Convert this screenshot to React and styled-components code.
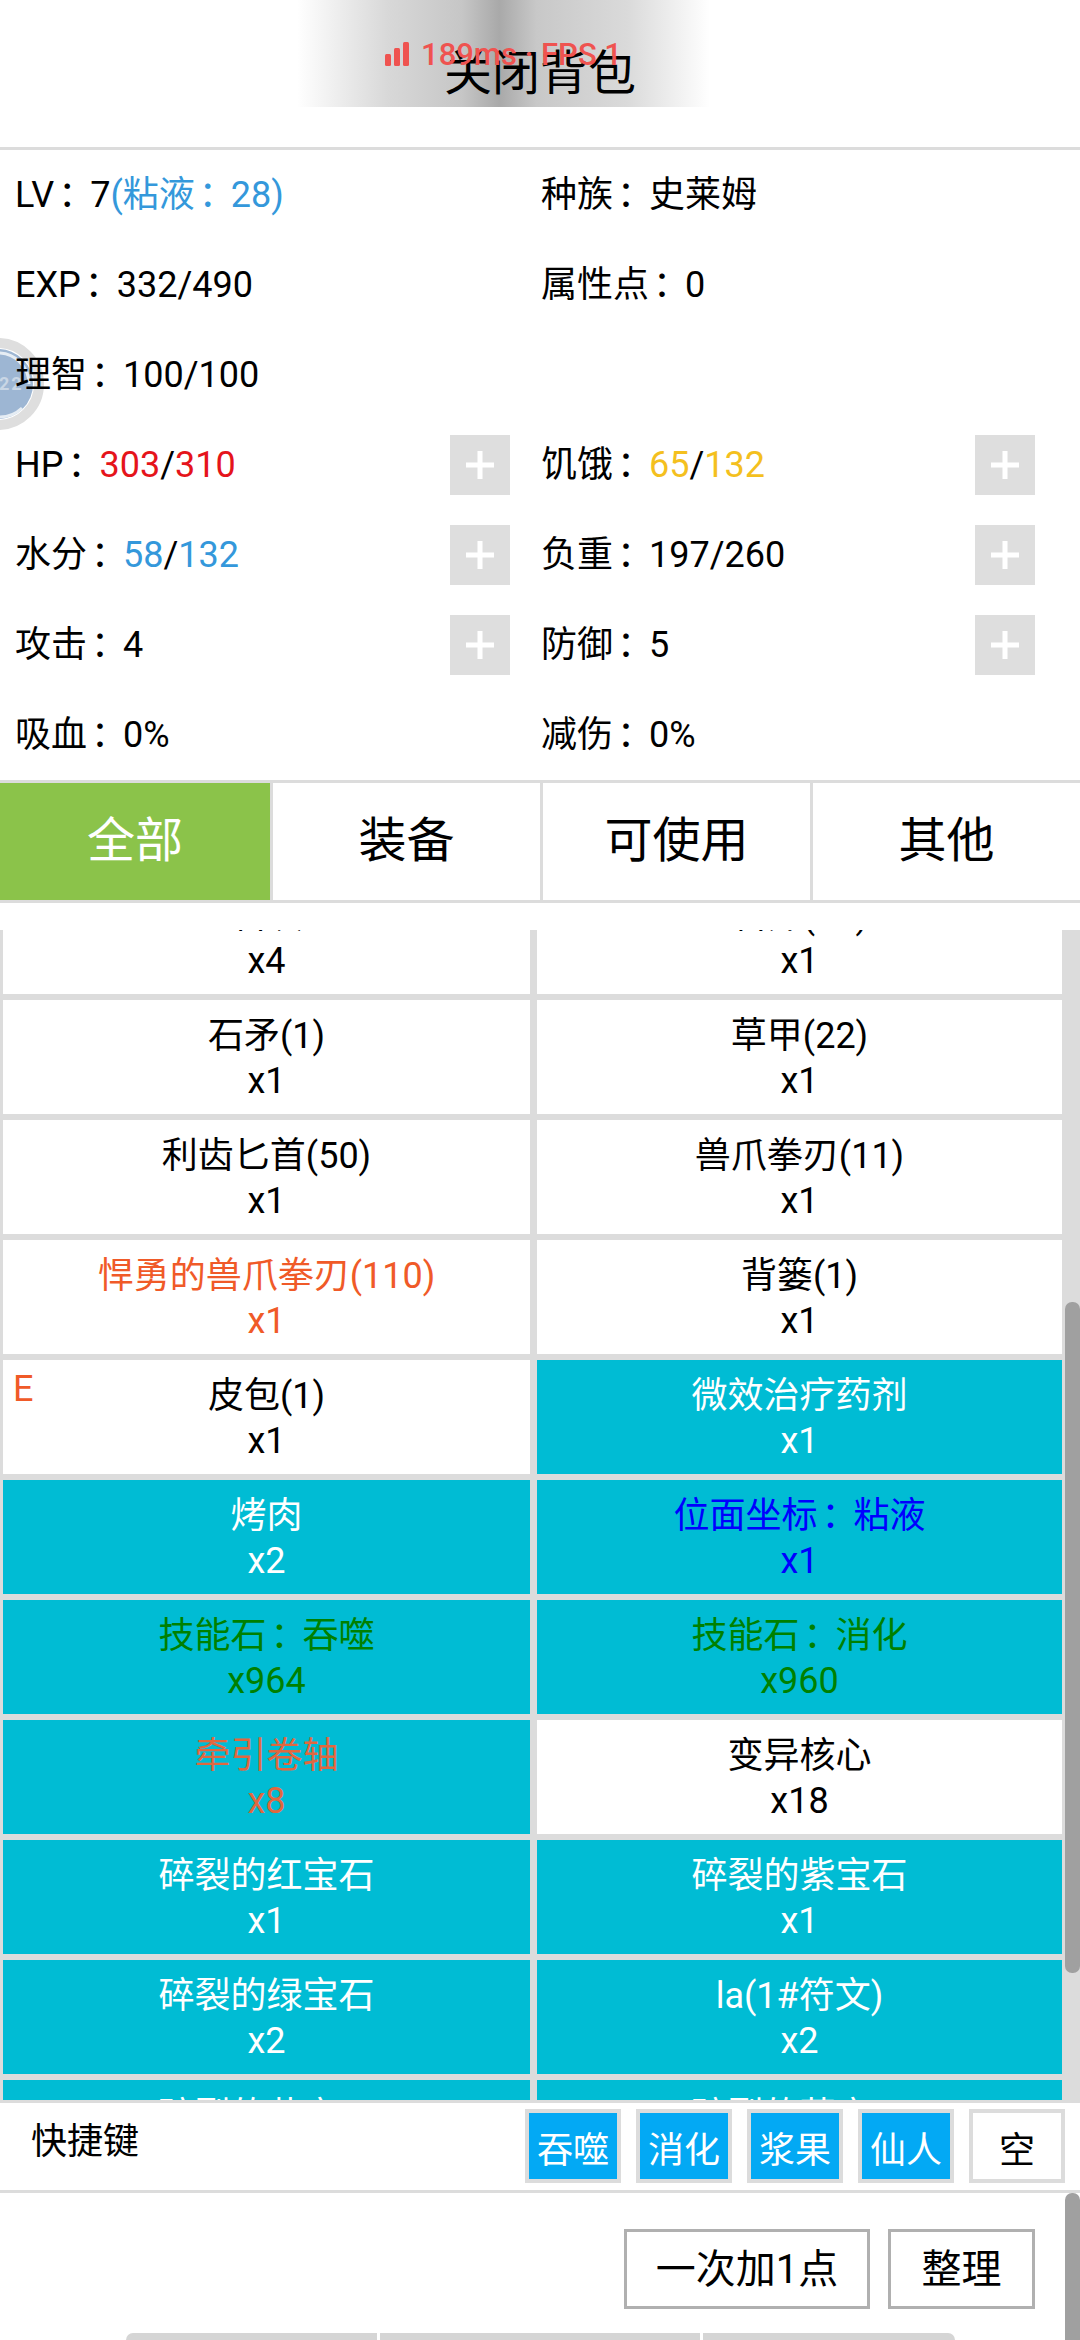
import React from 'react';
import styled, { createGlobalStyle } from 'styled-components';

const GlobalStyle = createGlobalStyle`
	html, body {
		margin: 0;
		padding: 0;
		background: #fff;
	}
	* {
		box-sizing: border-box;
	}
`;

const LINE = '#dcdcdc';
const TEAL = '#00bcd4';

const Page = styled.div`
	position: relative;
	z-index: 0;
	width: 1080px;
	height: 2340px;
	overflow: hidden;
	background: #fff;
	color: #000;
	font-family: Roboto, 'Noto Sans CJK SC', sans-serif;
	font-size: 36px;
	display: flex;
	flex-direction: column;
`;

const Header = styled.div`
	height: 150px;
	flex: none;
	border-bottom: 3px solid ${LINE};
	display: flex;
	justify-content: center;
	padding-top: 38px;
	font-size: 48px;
	line-height: 72px;
	background-image: linear-gradient(
		90deg,
		rgba(255, 255, 255, 0) 0%,
		#d8d8d8 22%,
		#c6c6c6 40%,
		#a9a9a9 49%,
		#c8c8c8 58%,
		#dadada 80%,
		rgba(255, 255, 255, 0) 100%
	);
	background-size: 413px 107px;
	background-position: 297px 0;
	background-repeat: no-repeat;
`;

const NetToast = styled.div`
	position: absolute;
	top: 42px;
	left: 297px;
	width: 413px;
	display: flex;
	justify-content: center;
	align-items: flex-start;
	gap: 12px;
	color: #ef5350;
	font-size: 31px;
	font-weight: 500;
	line-height: 26px;
	white-space: nowrap;
`;

const FloatBall = styled.svg`
	position: absolute;
	z-index: -1;
	left: -48px;
	top: 338px;
`;

const Stats = styled.div`
	flex: none;
	display: grid;
	grid-template-columns: 526px 525px;
	grid-auto-rows: 90px;
`;

const Stat = styled.div`
	display: flex;
	align-items: center;
	justify-content: space-between;
	padding: 0 16px 0 15px;
	line-height: 45px;
	white-space: nowrap;
`;

const Tint = styled.span`
	color: ${(p) => p.$color};
`;

const Colon = styled.span`
	padding-left: 4px;
	margin-right: -4px;
`;

const PlusButton = styled.div`
	width: 60px;
	height: 60px;
	flex: none;
	background: #dedede;
	color: #fff;
	display: flex;
	align-items: center;
	justify-content: center;
`;

const Tabs = styled.div`
	flex: none;
	display: grid;
	grid-template-columns: repeat(4, 270px);
	height: 123px;
	border-top: 3px solid ${LINE};
	border-bottom: 3px solid ${LINE};
`;

const Tab = styled.div`
	display: flex;
	align-items: center;
	justify-content: center;
	padding-bottom: 12px;
	font-size: 48px;
	background: ${(p) => (p.$active ? '#8bc34a' : '#fff')};
	color: ${(p) => (p.$active ? '#fff' : '#000')};
	border-left: ${(p) => (p.$active ? '0' : `3px solid ${LINE}`)};
`;

const ListWrap = styled.div`
	position: relative;
	flex: none;
	height: 1170px;
	margin-top: 27px;
	background: ${LINE};
	overflow: hidden;
`;

const ItemGrid = styled.div`
	display: grid;
	grid-template-columns: 527px 525px;
	grid-auto-rows: 114px;
	column-gap: 7px;
	row-gap: 6px;
	padding-left: 3px;
	margin-top: -50px;
`;

const Item = styled.div`
	position: relative;
	padding-top: 14px;
	text-align: center;
	line-height: 45px;
	background: ${(p) => (p.$used ? TEAL : '#fff')};
	color: ${(p) => p.$color || (p.$used ? '#fff' : '#000')};
`;

const EquipMark = styled.span`
	position: absolute;
	left: 10px;
	top: 11px;
	line-height: 36px;
	color: #f05a28;
`;

const ListThumb = styled.div`
	position: absolute;
	right: 0;
	top: 372px;
	width: 15px;
	height: 671px;
	background: #a0a0a0;
	border-radius: 7px;
`;

const Shortcuts = styled.div`
	flex: none;
	height: 93px;
	border-top: 3px solid ${LINE};
	border-bottom: 3px solid ${LINE};
	padding: 0 15px 0 31px;
	display: flex;
	justify-content: space-between;
`;

const ShortcutLabel = styled.div`
	margin-top: 17px;
	line-height: 45px;
`;

const ShortcutRow = styled.div`
	display: flex;
	gap: 15px;
	padding-top: 6px;
`;

const ShortcutKey = styled.div`
	width: 96px;
	height: 74px;
	padding-top: 1px;
	display: flex;
	align-items: center;
	justify-content: center;
	border: 4px solid ${LINE};
	background: ${(p) => (p.$filled ? '#03a9f4' : '#fff')};
	color: ${(p) => (p.$filled ? '#fff' : '#000')};
`;

const Footer = styled.div`
	position: relative;
	flex: 1;
	overflow: hidden;
`;

const Actions = styled.div`
	display: flex;
	justify-content: flex-end;
	gap: 18px;
	padding: 36px 45px 0 0;
`;

const ActionButton = styled.div`
	width: ${(p) => p.$width}px;
	height: 80px;
	padding-bottom: 6px;
	border: 3px solid #b0b0b0;
	font-size: 40px;
	display: flex;
	align-items: center;
	justify-content: center;
`;

const PeekRow = styled.div`
	display: flex;
	gap: 3px;
	margin: 24px 0 0 126px;
`;

const PeekButton = styled.div`
	width: ${(p) => p.$width}px;
	height: 7px;
	background: #d5d5d5;

	&:first-child {
		border-top-left-radius: 7px;
	}
	&:last-child {
		border-top-right-radius: 7px;
	}
`;

const PageThumb = styled.div`
	position: absolute;
	right: 0;
	top: 0;
	bottom: 0;
	width: 15px;
	background: #a0a0a0;
	border-top-left-radius: 7px;
	border-top-right-radius: 7px;
`;

const items = [
	{ name: '石块', count: 4 },
	{ name: '石斧(10)', count: 1 },
	{ name: '石矛(1)', count: 1 },
	{ name: '草甲(22)', count: 1 },
	{ name: '利齿匕首(50)', count: 1 },
	{ name: '兽爪拳刃(11)', count: 1 },
	{ name: '悍勇的兽爪拳刃(110)', count: 1, color: '#f05a28' },
	{ name: '背篓(1)', count: 1 },
	{ name: '皮包(1)', count: 1, equipped: true },
	{ name: '微效治疗药剂', count: 1, used: true },
	{ name: '烤肉', count: 2, used: true },
	{ name: '位面坐标：粘液', count: 1, used: true, color: '#0000ff' },
	{ name: '技能石：吞噬', count: 964, used: true, color: '#008000' },
	{ name: '技能石：消化', count: 960, used: true, color: '#008000' },
	{ name: '牵引卷轴', count: 8, used: true, color: '#e0683f' },
	{ name: '变异核心', count: 18 },
	{ name: '碎裂的红宝石', count: 1, used: true },
	{ name: '碎裂的紫宝石', count: 1, used: true },
	{ name: '碎裂的绿宝石', count: 2, used: true },
	{ name: 'la(1#符文)', count: 2, used: true },
	{ name: '碎裂的黄宝石', count: 1, used: true },
	{ name: '碎裂的蓝宝石', count: 1, used: true },
];

// the colon sits a bit further in than the SC glyph does
const withColon = (text) => {
	const parts = text.split('：');
	if (parts.length < 2) return text;
	return (
		<>
			{parts[0]}
			<Colon>：</Colon>
			{parts[1]}
		</>
	);
};

const Plus = () => (
	<svg width='30' height='30' viewBox='0 0 30 30'>
		<path d='M15 1v28M1 15h28' stroke='currentColor' strokeWidth='5' fill='none' />
	</svg>
);

const StatCell = ({ label, plus, children }) => (
	<Stat>
		<span>
			{label}
			<Colon>：</Colon>
			{children}
		</span>
		{plus && (
			<PlusButton>
				<Plus />
			</PlusButton>
		)}
	</Stat>
);

const App = () => {
	return (
		<Page>
			<GlobalStyle />

			<FloatBall width='92' height='92' viewBox='0 0 92 92'>
				<circle cx='46' cy='46' r='41' fill='#fff' stroke='#dedede' strokeWidth='10' />
				<circle cx='46' cy='46' r='35' fill='#9db6d3' />
				<path d='M46 15a31 31 0 0 1 31 31' stroke='#e6edf4' strokeWidth='3' fill='none' />
				<path d='M70 70a33 33 0 0 1-24 9' stroke='#e6edf4' strokeWidth='3' fill='none' />
				<text x='47' y='52' fontFamily='Roboto, sans-serif' fontSize='18' fontWeight='700' letterSpacing='2' fill='#c9d6e5'>
					22
				</text>
			</FloatBall>

			<Header>关闭背包</Header>

			<NetToast>
				<svg width='24' height='24' viewBox='0 0 24 24'>
					<rect x='0' y='12' width='6' height='12' rx='1.5' fill='currentColor' />
					<rect x='9' y='6' width='6' height='18' rx='1.5' fill='currentColor' />
					<rect x='18' y='0' width='6' height='24' rx='1.5' fill='currentColor' />
				</svg>
				<span>189ms · FPS 1</span>
			</NetToast>

			<Stats>
				<StatCell label='LV'>
					7<Tint $color='#3498db'>(粘液<Colon>：</Colon>28)</Tint>
				</StatCell>
				<StatCell label='种族'>史莱姆</StatCell>
				<StatCell label='EXP'>332/490</StatCell>
				<StatCell label='属性点'>0</StatCell>
				<StatCell label='理智'>100/100</StatCell>
				<Stat />
				<StatCell label='HP' plus>
					<Tint $color='#e5141b'>303</Tint>/<Tint $color='#e5141b'>310</Tint>
				</StatCell>
				<StatCell label='饥饿' plus>
					<Tint $color='#f4c01e'>65</Tint>/<Tint $color='#f4c01e'>132</Tint>
				</StatCell>
				<StatCell label='水分' plus>
					<Tint $color='#3498db'>58</Tint>/<Tint $color='#3498db'>132</Tint>
				</StatCell>
				<StatCell label='负重' plus>197/260</StatCell>
				<StatCell label='攻击' plus>4</StatCell>
				<StatCell label='防御' plus>5</StatCell>
				<StatCell label='吸血'>0%</StatCell>
				<StatCell label='减伤'>0%</StatCell>
			</Stats>

			<Tabs>
				<Tab $active>全部</Tab>
				<Tab>装备</Tab>
				<Tab>可使用</Tab>
				<Tab>其他</Tab>
			</Tabs>

			<ListWrap>
				<ItemGrid>
					{items.map((item, id) => (
						<Item key={id} $used={item.used} $color={item.color}>
							{item.equipped && <EquipMark>E</EquipMark>}
							<div>{withColon(item.name)}</div>
							<div>x{item.count}</div>
						</Item>
					))}
				</ItemGrid>
				<ListThumb />
			</ListWrap>

			<Shortcuts>
				<ShortcutLabel>快捷键</ShortcutLabel>
				<ShortcutRow>
					<ShortcutKey $filled>吞噬</ShortcutKey>
					<ShortcutKey $filled>消化</ShortcutKey>
					<ShortcutKey $filled>浆果</ShortcutKey>
					<ShortcutKey $filled>仙人</ShortcutKey>
					<ShortcutKey>空</ShortcutKey>
				</ShortcutRow>
			</Shortcuts>

			<Footer>
				<Actions>
					<ActionButton $width={246}>一次加1点</ActionButton>
					<ActionButton $width={147}>整理</ActionButton>
				</Actions>
				<PeekRow>
					<PeekButton $width={251} />
					<PeekButton $width={320} />
					<PeekButton $width={252} />
				</PeekRow>
				<PageThumb />
			</Footer>
		</Page>
	);
};

export default App;
